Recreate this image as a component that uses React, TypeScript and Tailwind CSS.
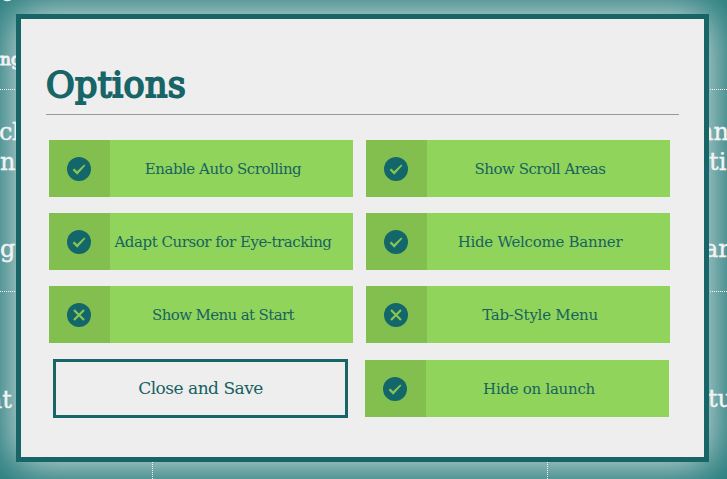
import React from 'react';

const slab = "font-['DejaVu_Serif',serif]";

function StatusIcon({ on }: { on: boolean }) {
  return (
    <svg width="24" height="24" viewBox="0 0 24 24" aria-hidden="true">
      <circle cx="12" cy="12" r="12" fill="#13666a" />
      {on ? (
        <path d="M5.6 13 L7.4 11.5 L10 14.3 L17.2 7.4 L18.4 8.5 L10.2 17.8 Z" fill="#86c552" />
      ) : (
        <path d="M7 7 L17 17 M17 7 L7 17" stroke="#86c552" strokeWidth="2.3" fill="none" />
      )}
    </svg>
  );
}

interface OptionProps {
  label: string;
  on: boolean;
  spacing: string;
  className?: string;
}

function Option({ label, on, spacing, className = '' }: OptionProps) {
  return (
    <button className={`flex h-[57px] w-[304px] bg-[#91d45b] text-[#17635f] ${className}`}>
      <span className="flex h-full w-[61px] shrink-0 items-center bg-[#82bf4f] pl-[18px]">
        <StatusIcon on={on} />
      </span>
      <span className={`flex h-full w-[226px] items-center justify-center pt-[2px] whitespace-nowrap text-[15px] ${spacing} ${slab}`}>
        {label}
      </span>
    </button>
  );
}

function BackdropLine({ left, right, className }: { left: React.ReactNode; right: React.ReactNode; className: string }) {
  return (
    <div className={`flex justify-between leading-[30px] ${className}`}>
      <span className="flex w-4 whitespace-nowrap">{left}</span>
      <span className="flex w-[22px] whitespace-nowrap">{right}</span>
    </div>
  );
}

function Backdrop() {
  return (
    <div className={`flex h-full flex-col text-[24px] text-[#f2f7f6] [-webkit-text-stroke:0.4px_#f2f7f6] ${slab}`}>
      <div className="h-[90px] border-b border-dotted border-white">
        <BackdropLine className="-mt-[22px]" left={<span>o</span>} right="" />
        <BackdropLine className="mt-[36px] text-[17px] [-webkit-text-stroke:1px_#f2f7f6]" left="ng" right="" />
      </div>
      <div className="h-[202px] border-b border-dotted border-white pt-[27px]">
        <BackdropLine className="" left={<span className="-ml-px tracking-[-0.5px]">cl</span>} right={<span className="-ml-[7px]">nn</span>} />
        <BackdropLine className="" left="n" right={<span className="ml-[4px]">ti</span>} />
        <BackdropLine className="mt-[57px]" left="g" right={<span className="-ml-px">ar</span>} />
      </div>
      <div className="flex h-[187px]">
        <div className="w-[153px] border-r border-dotted border-white pt-[90px]">
          <span className="-ml-[12px] leading-[30px]">at</span>
        </div>
        <div className="w-[395px] border-r border-dotted border-white" />
        <div className="flex flex-1 justify-end pt-[92px]">
          <span className="-mr-[6px] leading-[30px]">atu</span>
        </div>
      </div>
    </div>
  );
}

export default function App() {
  return (
    <main className="relative h-[479px] w-[727px] overflow-hidden bg-[#247b7c]">
      <Backdrop />
      <section
        role="dialog"
        aria-label="Options"
        className="absolute top-[14px] left-4 h-[448px] w-[693px] border-5 border-[#176567] bg-[#eee] pl-[25px] shadow-[0_0_42px_2px_rgba(238,238,238,0.95)]"
      >
        <h1 className={`h-[95px] w-[633px] pt-[43px] text-[35px] leading-[46px] font-normal text-[#176567] [-webkit-text-stroke:1.9px_#176567] ${slab}`}>
          <span className="tracking-[0.3px]">Options</span>
        </h1>
        <hr className="w-[633px] border-t border-[#999]" />
        <div className="grid grid-cols-[304px_304px] gap-x-[13px] gap-y-4 pt-[25px] pl-[3px]">
          <Option on label="Enable Auto Scrolling" spacing="tracking-[-0.48px]" />
          <Option on label="Show Scroll Areas" spacing="tracking-[-0.5px]" />
          <Option on label="Adapt Cursor for Eye-tracking" spacing="tracking-[-0.46px]" />
          <Option on label="Hide Welcome Banner" spacing="tracking-[-0.26px]" />
          <Option on={false} label="Show Menu at Start" spacing="tracking-[-0.62px]" />
          <Option on={false} label="Tab-Style Menu" spacing="tracking-[-0.25px]" />
          <button
            className={`ml-1 h-[59px] w-[295px] border-3 border-[#176567] text-[17px] tracking-[-0.5px] text-[#17605f] ${slab}`}
          >
            Close and Save
          </button>
          <Option on label="Hide on launch" spacing="tracking-[-0.28px]" className="mt-px -ml-px" />
        </div>
      </section>
    </main>
  );
}
